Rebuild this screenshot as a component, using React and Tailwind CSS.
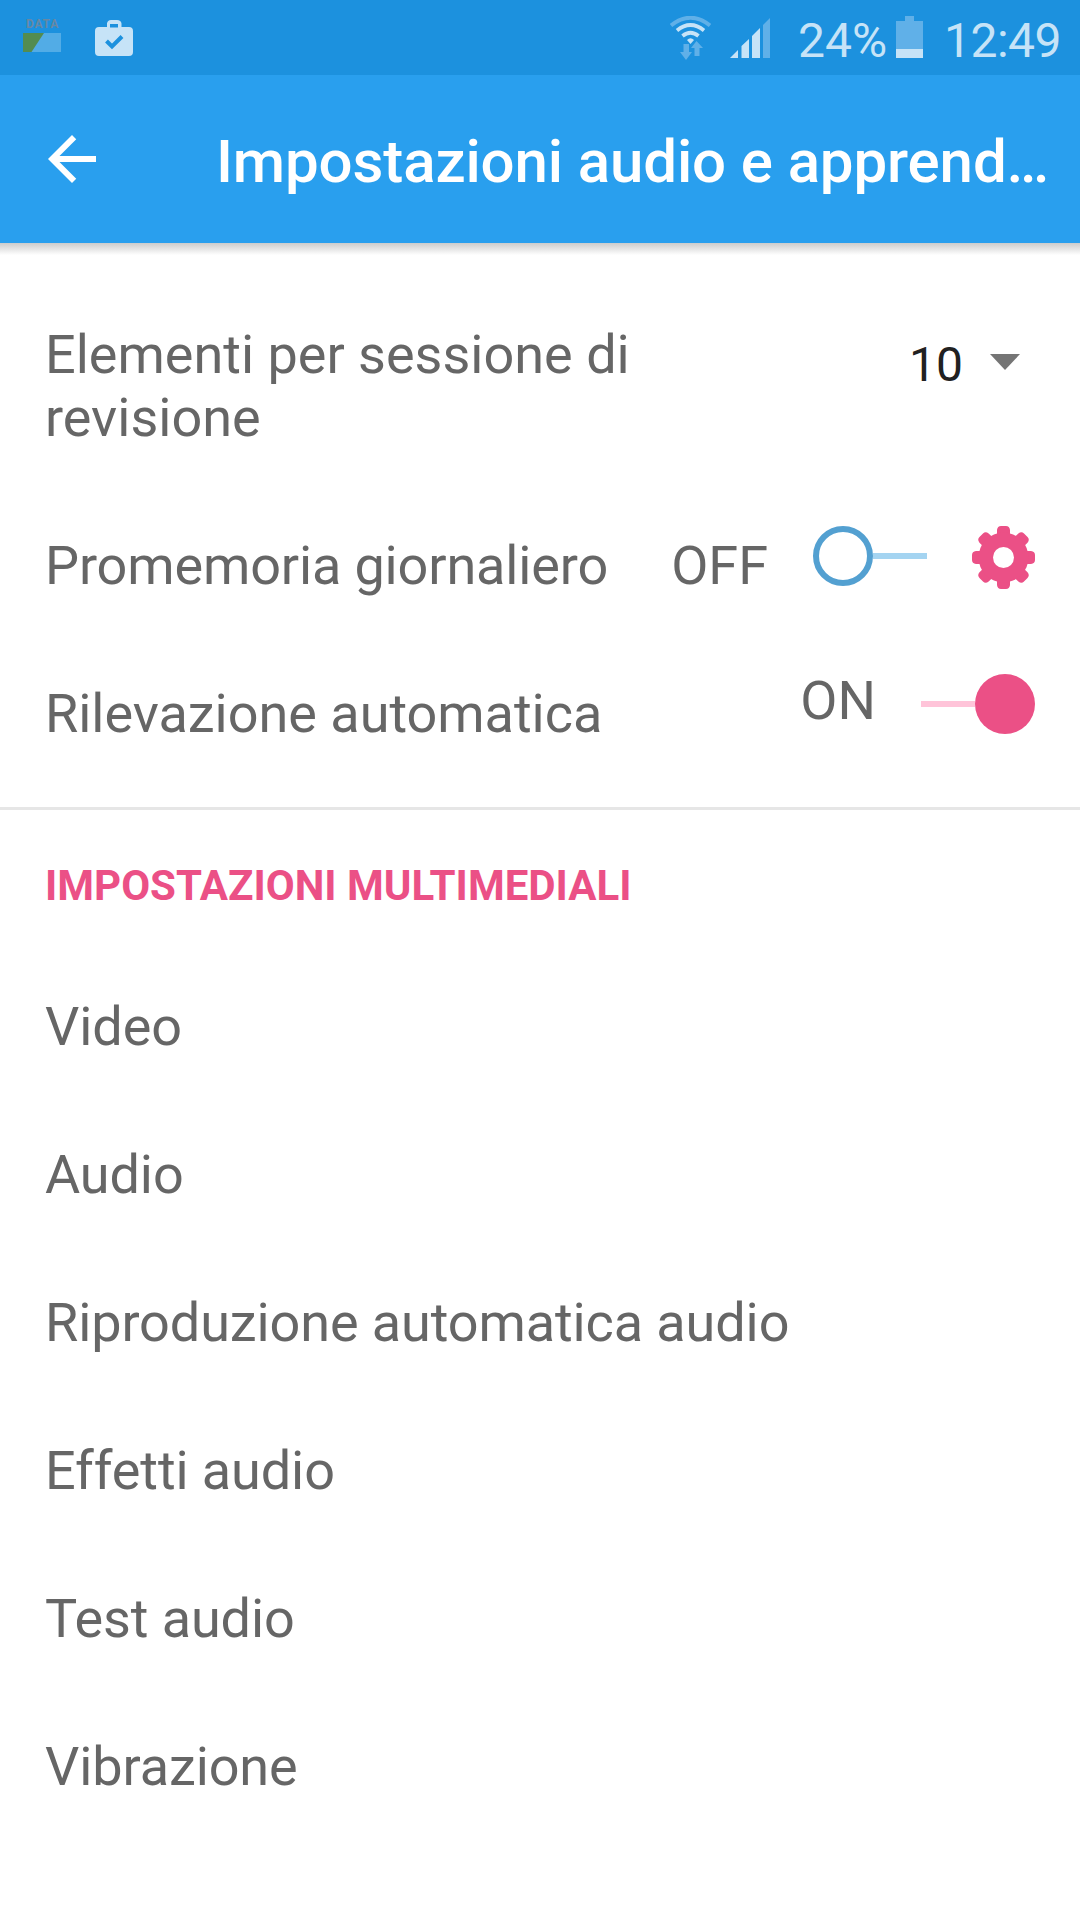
function StatusBar() {
  return (
    <div className="flex h-[75px] items-start bg-[#1c91de] text-[#c6e3f7]">
      <div className="ml-[23px] mt-[18px] w-[38px]">
        <div className="pl-[3px] font-bold text-[12px] leading-[12px] tracking-[0.8px] text-[#6888a3]">DATA</div>
        <svg className="mt-[3px] block" width="38" height="19" viewBox="0 0 38 19">
          <rect width="38" height="19" fill="#52ace6" />
          <path d="M0 0H21L8.5 19H0Z" fill="#538c50" />
        </svg>
      </div>
      <svg className="ml-[34px] mt-5 block" width="38" height="36" viewBox="0 0 38 36" fill="none">
        <path
          fill="#c6e3f7"
          fillRule="evenodd"
          d="M12 7V3.5Q12.500 0 16 0H22Q26 0 26.500 3.500V7H34Q38 7 38 11V32Q38 36 34 36H4Q0 36 0 32V11Q0 7 4 7ZM15 7.500H23V4H15Z"
        />
        <path d="M11.500 21L17 26.500L27 16.500" stroke="#1c91de" strokeWidth="4" />
      </svg>
      <svg className="ml-[537px] mt-4 block" width="41" height="44" viewBox="0 0 41 44" fill="none">
        <path d="M1 9.500Q20.500 -6 40 9.500" stroke="#60b0e8" strokeWidth="4" />
        <path d="M7 14.500Q20.500 3.500 34 14.500" stroke="#c6e3f7" strokeWidth="3.800" />
        <path d="M12.500 20Q20.500 13.500 28.500 20" stroke="#c6e3f7" strokeWidth="3.800" />
        <path d="M17 24Q20.500 20.500 24 24L20.500 28Z" fill="#c6e3f7" />
        <path d="M13.500 28H19V36H22L16 44L10 36H13.500ZM24.500 40V32H21L26.500 25L33 32H29.500V40Z" fill="#60b0e8" />
      </svg>
      <svg className="ml-[19px] mt-[18px] block" width="40" height="40" viewBox="0 0 40 40">
        <path d="M0 40L8 32V40ZM11.500 40V28L19 21V40ZM22 40V18L30 10V40Z" fill="#c6e3f7" />
        <path d="M33 40V7L40 0V40Z" fill="#60b0e8" />
      </svg>
      <span className="ml-[28px] mt-[11px] w-[98px] whitespace-nowrap text-[48px] leading-[60px] font-normal">24%</span>
      <svg className="mt-4 block" width="27" height="42" viewBox="0 0 27 42">
        <path d="M0 5H9V0H18V5H27V33H0Z" fill="#60b0e8" />
        <path d="M0 33H27V42H0Z" fill="#c6e3f7" />
      </svg>
      <span className="ml-[21px] mt-[11px] whitespace-nowrap text-[48px] leading-[60px] font-normal tracking-[-0.5px]">12:49</span>
    </div>
  );
}

function AppBar() {
  return (
    <header className="flex h-[168px] items-center bg-[#299fee] text-white">
      <svg className="ml-9 block" width="72" height="72" viewBox="0 0 24 24" fill="currentColor">
        <path d="M20 11H7.830l5.590-5.590L12 4l-8 8 8 8 1.410-1.410L7.830 13H20v-2z" />
      </svg>
      <h1 className="ml-[108px] mt-[5px] whitespace-nowrap text-[60px] leading-[70px] font-medium tracking-[-0.12px]">
        Impostazioni audio e apprend…
      </h1>
    </header>
  );
}

function Switch({ on }) {
  return on ? (
    <div className="flex items-center">
      <div className="h-[6px] w-[54px] bg-[#ffc4d9]" />
      <div className="size-[60px] rounded-full bg-[#eb5086]" />
    </div>
  ) : (
    <div className="flex items-center">
      <div className="size-[60px] rounded-full border-[6px] border-[#53a0d1]" />
      <div className="h-[6px] w-[54px] bg-[#a4d4f1]" />
    </div>
  );
}

const TEETH = [0, 45, 90, 135, 180, 225, 270, 315];

function Gear() {
  return (
    <svg className="block" width="63" height="63" viewBox="-31.500 -31.500 63 63">
      <g fill="#eb5086">
        {TEETH.map((a) => (
          <path key={a} transform={`rotate(${a})`} d="M-6.500 -22V-27.500Q-6 -31.500 -2.500 -31.500H2.500Q6 -31.500 6.500 -27.500V-22L10 -18H-10Z" />
        ))}
        <circle r="25" />
      </g>
      <circle r="10.500" fill="#fff" />
    </svg>
  );
}

const MEDIA = ["Video", "Audio", "Riproduzione automatica audio", "Effetti audio", "Test audio", "Vibrazione"];

export default function App() {
  return (
    <div className="h-[1920px] w-[1080px] overflow-hidden bg-white font-[Roboto,sans-serif] text-[54px] leading-[63px] text-[#666666]">
      <StatusBar />
      <AppBar />
      <div className="h-[12px] bg-linear-to-b from-[#cccccc] to-white" />
      <main>
        <div className="flex h-[237px] items-start pl-[45px]">
          <div className="mt-[68px] w-[640px]">Elementi per sessione di revisione</div>
          <div className="ml-[224px] mt-[77px] w-[81px] text-[48px] leading-[66px] text-[#212121]">10</div>
          <svg className="mt-[99px] block" width="30" height="16" viewBox="0 0 30 16">
            <path d="M0 0H30L15 16Z" fill="#757575" />
          </svg>
        </div>
        <div className="flex h-[148px] items-start pl-[45px] pr-[45px]">
          <div className="mt-[42px] grow tracking-[-0.14px]">Promemoria giornaliero</div>
          <div className="mt-[42px] mr-[45px]">OFF</div>
          <div className="mt-[34px] mr-[45px]"><Switch /></div>
          <div className="mt-[34px]"><Gear /></div>
        </div>
        <div className="flex h-[167px] items-start pl-[45px] pr-[45px]">
          <div className="mt-[42px] grow tracking-[-0.02px]">Rilevazione automatica</div>
          <div className="mt-[29px] mr-[45px]">ON</div>
          <div className="mt-[34px]"><Switch on /></div>
        </div>
        <div className="h-[3px] bg-[#e6e6e6]" />
        <h2 className="mt-[51px] pl-[45px] text-[42px] leading-[50px] font-bold text-[#eb5086]">IMPOSTAZIONI MULTIMEDIALI</h2>
        <ul className="mt-[41px] pl-[45px] tracking-[-0.1px]">
          {MEDIA.map((m) => (
            <li key={m} className="flex h-[148px] items-center">{m}</li>
          ))}
        </ul>
      </main>
    </div>
  );
}
